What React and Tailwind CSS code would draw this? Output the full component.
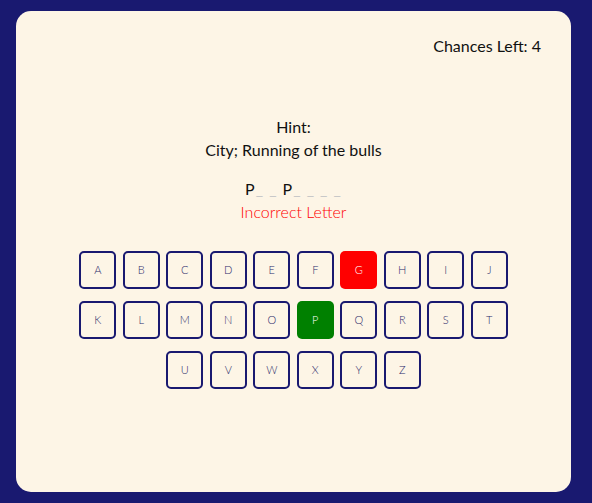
import React from "react";

const rows = [
  ["A", "B", "C", "D", "E", "F", "G", "H", "I", "J"],
  ["K", "L", "M", "N", "O", "P", "Q", "R", "S", "T"],
  ["U", "V", "W", "X", "Y", "Z"],
];

function Key({ l }) {
  let cls =
    "w-[37px] h-[38px] rounded-[5px] flex items-center justify-center text-[11px] font-light ";
  if (l === "G") cls += "bg-[#ff0000] text-white";
  else if (l === "P") cls += "bg-[#008000] text-white";
  else cls += "border-2 border-[#191970] text-[#2a2a6a]";
  return <div className={cls}>{l}</div>;
}

export default function App() {
  return (
    <div
      className="w-[592px] h-[503px] bg-[#191970] pt-[11px] pl-[16px]"
      style={{ fontFamily: "Lato, 'Noto Sans', sans-serif" }}
    >
      <div className="w-[555px] h-[481px] bg-[#fdf5e6] rounded-[15px] flex flex-col pt-[23px] pr-[30px]">
        <div className="flex justify-end text-[16px] leading-[24px] text-[#111]">
          Chances Left: 4
        </div>
        <div className="mt-[57px] flex flex-col items-center pl-[30px] text-[16px] leading-[23px] text-[#111]">
          <div>Hint:</div>
          <div>City; Running of the bulls</div>
          <div className="mt-[16px] tracking-[1px]">
            P<span className="text-[#c8c8c8]">_ _ </span>P
            <span className="text-[#c8c8c8]">_ _ _ _</span>
          </div>
          <div className="text-[#ff0000] font-light">Incorrect Letter</div>
        </div>
        <div className="mt-[28px] pl-[30px] flex flex-col items-center gap-[12px]">
          {rows.map((r, i) => (
            <div key={i} className="flex gap-[6.5px]">
              {r.map((l) => (
                <Key key={l} l={l} />
              ))}
            </div>
          ))}
        </div>
      </div>
    </div>
  );
}
